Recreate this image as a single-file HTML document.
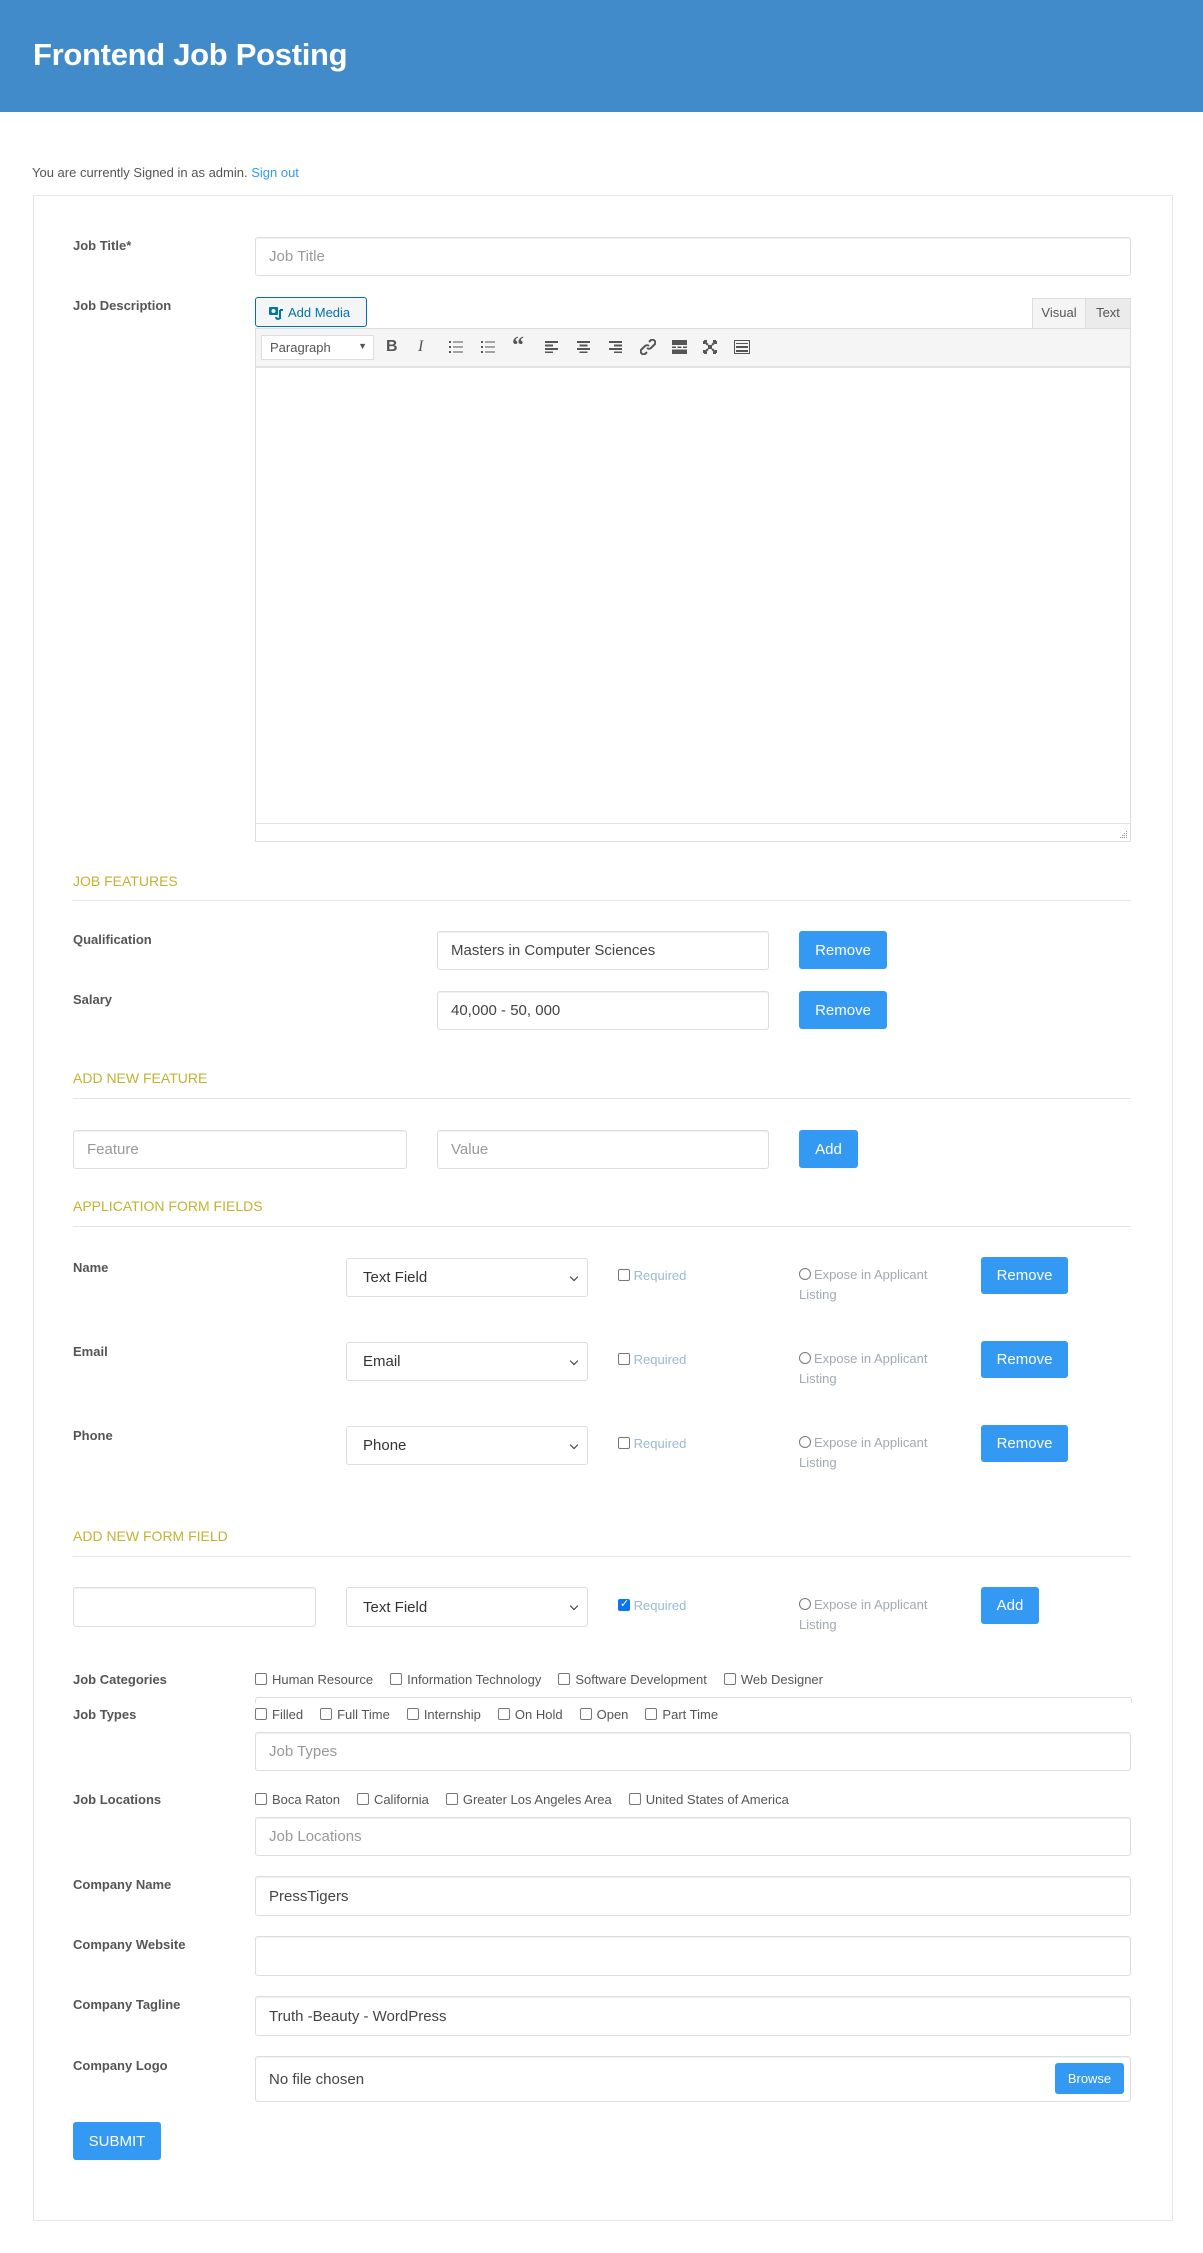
<!DOCTYPE html>
<html><head><meta charset="utf-8">
<style>
*{box-sizing:border-box;margin:0;padding:0}
body{width:1203px;height:2253px;background:#fff;font-family:"Liberation Sans",sans-serif;position:relative;overflow:hidden;color:#444}
.a{position:absolute}
.hdr{left:0;top:0;width:1203px;height:112px;background:#418bca}
.hdr h1{position:absolute;left:33px;top:37px;color:#fff;font-size:31px;font-weight:bold;letter-spacing:-0.3px}
.box{left:33px;top:195px;width:1140px;height:2026px;border:1px solid #e6e6e6}
.lbl{font-size:13px;font-weight:bold;color:#555;left:73px}
.inp{border:1px solid #ddd;border-radius:3px;background:#fff;font-size:15px;color:#444;padding-left:13px;display:flex;align-items:center;box-shadow:inset 0 1px 1px rgba(0,0,0,.06)}
.ph{color:#999}
.btn{background:#3399f3;color:#fff;border-radius:3px;font-size:15px;display:flex;align-items:center;justify-content:center}
.h2{left:73px;font-size:14px;color:#c2b330}
.hr{left:73px;width:1058px;height:1px;background:#e6e6e6}
.sel{border:1px solid #ddd;border-radius:3px;font-size:15px;color:#333;padding-left:16px;display:flex;align-items:center}
.sel:after{content:"";position:absolute;right:10px;top:15px;width:5px;height:5px;border-right:1.5px solid #333;border-bottom:1.5px solid #333;transform:rotate(45deg)}
.cb{width:12px;height:12px;border:1px solid #777;border-radius:2px;display:inline-block;vertical-align:-1px;background:#fff}
.req{font-size:13px;color:#9ab9d6}
.exp{font-size:13px;color:#a0aab3;line-height:20px;width:150px}
.rd{width:12px;height:12px;border:1px solid #777;border-radius:50%;display:inline-block;vertical-align:-1px;margin-right:3px}
.chk{font-size:13px;color:#555;left:255px;white-space:nowrap}
.chk span.cb{margin-right:5px}
.chk i{font-style:normal;margin-right:17px}
.tb svg{position:absolute}
</style></head><body>
<div class="a hdr"><h1>Frontend Job Posting</h1></div>
<div class="a" style="left:32px;top:165px;font-size:13px;color:#555">You are currently Signed in as admin. <span style="color:#3399f3">Sign out</span></div>
<div class="a box"></div>

<div class="a lbl" style="top:238px">Job Title*</div>
<div class="a inp" style="left:255px;top:237px;width:876px;height:39px"><span class="ph">Job Title</span></div>

<div class="a lbl" style="top:298px">Job Description</div>
<div class="a" style="left:255px;top:297px;width:112px;height:30px;border:1px solid #0073aa;border-radius:3px;background:#f3f5f6;font-size:13px;color:#0073aa;display:flex;align-items:center;padding-left:32px">Add Media
<svg class="a" style="left:13px;top:8px" width="16" height="15" viewBox="0 0 16 15"><rect x="0" y="1" width="9" height="8" rx="1" fill="#0073aa"/><circle cx="4.5" cy="5" r="2" fill="#f3f5f6"/><path d="M11 4v9M11 4h3M7 11a2 2 0 1 0 4 0" stroke="#0073aa" stroke-width="2" fill="none"/></svg></div>
<div class="a" style="left:1032px;top:298px;width:54px;height:30px;background:#f5f5f5;border:1px solid #ddd;border-bottom:none;font-size:13px;color:#555;text-align:center;line-height:28px">Visual</div>
<div class="a" style="left:1086px;top:298px;width:45px;height:30px;background:#ebebeb;border:1px solid #ddd;border-left:none;border-bottom:none;font-size:13px;color:#555;text-align:center;line-height:28px">Text</div>
<div class="a" style="left:255px;top:328px;width:876px;height:514px;border:1px solid #ddd;background:#fff"></div>
<div class="a tb" style="left:256px;top:329px;width:874px;height:39px;background:#f5f5f5;border-bottom:2px solid #e2e2e2">
 <div class="a" style="left:5px;top:6px;width:113px;height:25px;background:#fff;border:1px solid #ddd;font-size:13px;color:#555;padding:4px 0 0 8px">Paragraph<span style="position:absolute;right:6px;top:5px;font-size:9px">▼</span></div>
 <div class="a" style="left:130px;top:9px;font-size:16px;font-weight:bold;color:#555">B</div>
 <div class="a" style="left:162px;top:9px;font-size:16px;font-style:italic;font-family:'Liberation Serif',serif;color:#555">I</div>
 <svg style="left:193px;top:12px" width="14" height="12"><g fill="#555"><rect x="0" y="0" width="2" height="2"/><rect x="0" y="5" width="2" height="2"/><rect x="0" y="10" width="2" height="2"/><rect x="4" y="0.5" width="10" height="1"/><rect x="4" y="5.5" width="10" height="1"/><rect x="4" y="10.5" width="10" height="1"/></g></svg>
 <svg style="left:225px;top:12px" width="14" height="12"><g fill="#555"><rect x="0" y="0" width="2" height="2"/><rect x="0" y="5" width="2" height="2"/><rect x="0" y="10" width="2" height="2"/><rect x="4" y="0.5" width="10" height="1"/><rect x="4" y="5.5" width="10" height="1"/><rect x="4" y="10.5" width="10" height="1"/></g></svg>
 <div class="a" style="left:256px;top:4px;font-size:24px;font-weight:bold;color:#555;font-family:'Liberation Serif',serif">“</div>
 <svg style="left:289px;top:12px" width="13" height="12"><g fill="#555"><rect y="0" width="13" height="2"/><rect y="3.5" width="8" height="2"/><rect y="7" width="13" height="2"/><rect y="10.5" width="8" height="1.5"/></g></svg>
 <svg style="left:321px;top:12px" width="13" height="12"><g fill="#555"><rect y="0" width="13" height="2"/><rect x="2.5" y="3.5" width="8" height="2"/><rect y="7" width="13" height="2"/><rect x="2.5" y="10.5" width="8" height="1.5"/></g></svg>
 <svg style="left:353px;top:12px" width="13" height="12"><g fill="#555"><rect y="0" width="13" height="2"/><rect x="5" y="3.5" width="8" height="2"/><rect y="7" width="13" height="2"/><rect x="5" y="10.5" width="8" height="1.5"/></g></svg>
 <svg style="left:384px;top:10px" width="16" height="16"><path d="M9 3l2-2a3 3 0 0 1 4 4l-4 4a3 3 0 0 1-4 0M7 13l-2 2a3 3 0 0 1-4-4l4-4a3 3 0 0 1 4 0" stroke="#555" stroke-width="2" fill="none"/></svg>
 <svg style="left:416px;top:11px" width="15" height="14"><g fill="#555"><rect width="15" height="5"/><rect y="6.5" width="4" height="1.5"/><rect x="5.5" y="6.5" width="4" height="1.5"/><rect x="11" y="6.5" width="4" height="1.5"/><rect y="9.5" width="15" height="4.5"/></g></svg>
 <svg style="left:447px;top:11px" width="14" height="14"><path d="M1 1l4 4M13 1l-4 4M1 13l4-4M13 13l-4-4M1 1h3M1 1v3M13 1h-3M13 1v3M1 13h3M1 13v-3M13 13h-3M13 13v-3" stroke="#555" stroke-width="2" fill="none"/><rect x="5" y="5" width="4" height="4" fill="#555"/></svg>
 <svg style="left:478px;top:11px" width="16" height="14"><rect x="0.5" y="0.5" width="15" height="13" fill="none" stroke="#555"/><g fill="#555"><rect x="2" y="3" width="12" height="1"/><rect x="2" y="6" width="12" height="2"/><rect x="2" y="10" width="12" height="2"/></g></svg>
</div>
<div class="a" style="left:256px;top:823px;width:874px;height:1px;background:#e2e2e2"></div>
<svg class="a" style="left:1118px;top:829px" width="10" height="10"><g fill="#999"><rect x="8" y="2" width="1" height="1"/><rect x="6" y="4" width="1" height="1"/><rect x="8" y="4" width="1" height="1"/><rect x="4" y="6" width="1" height="1"/><rect x="6" y="6" width="1" height="1"/><rect x="8" y="6" width="1" height="1"/><rect x="2" y="8" width="1" height="1"/><rect x="4" y="8" width="1" height="1"/><rect x="6" y="8" width="1" height="1"/><rect x="8" y="8" width="1" height="1"/></g></svg>

<div class="a h2" style="top:873px">JOB FEATURES</div>
<div class="a hr" style="top:900px"></div>
<div class="a lbl" style="top:932px">Qualification</div>
<div class="a inp" style="left:437px;top:931px;width:332px;height:39px">Masters in Computer Sciences</div>
<div class="a btn" style="left:799px;top:931px;width:88px;height:38px">Remove</div>
<div class="a lbl" style="top:992px">Salary</div>
<div class="a inp" style="left:437px;top:991px;width:332px;height:39px">40,000 - 50, 000</div>
<div class="a btn" style="left:799px;top:991px;width:88px;height:38px">Remove</div>

<div class="a h2" style="top:1070px">ADD NEW FEATURE</div>
<div class="a hr" style="top:1098px"></div>
<div class="a inp" style="left:73px;top:1130px;width:334px;height:39px"><span class="ph">Feature</span></div>
<div class="a inp" style="left:437px;top:1130px;width:332px;height:39px"><span class="ph">Value</span></div>
<div class="a btn" style="left:799px;top:1130px;width:59px;height:38px">Add</div>

<div class="a h2" style="top:1198px">APPLICATION FORM FIELDS</div>
<div class="a hr" style="top:1226px"></div>

<div class="a lbl" style="top:1260px">Name</div>
<div class="a sel" style="left:346px;top:1258px;width:242px;height:39px">Text Field</div>
<div class="a req" style="left:618px;top:1268px"><span class="cb"></span> Required</div>
<div class="a exp" style="left:799px;top:1265px"><span class="rd"></span>Expose in Applicant Listing</div>
<div class="a btn" style="left:981px;top:1257px;width:87px;height:37px">Remove</div>

<div class="a lbl" style="top:1344px">Email</div>
<div class="a sel" style="left:346px;top:1342px;width:242px;height:39px">Email</div>
<div class="a req" style="left:618px;top:1352px"><span class="cb"></span> Required</div>
<div class="a exp" style="left:799px;top:1349px"><span class="rd"></span>Expose in Applicant Listing</div>
<div class="a btn" style="left:981px;top:1341px;width:87px;height:37px">Remove</div>

<div class="a lbl" style="top:1428px">Phone</div>
<div class="a sel" style="left:346px;top:1426px;width:242px;height:39px">Phone</div>
<div class="a req" style="left:618px;top:1436px"><span class="cb"></span> Required</div>
<div class="a exp" style="left:799px;top:1433px"><span class="rd"></span>Expose in Applicant Listing</div>
<div class="a btn" style="left:981px;top:1425px;width:87px;height:37px">Remove</div>

<div class="a h2" style="top:1528px">ADD NEW FORM FIELD</div>
<div class="a hr" style="top:1556px"></div>
<div class="a inp" style="left:73px;top:1587px;width:243px;height:40px"></div>
<div class="a sel" style="left:346px;top:1587px;width:242px;height:40px">Text Field</div>
<div class="a req" style="left:618px;top:1598px"><span class="cb" style="background:#0a75f0;border-color:#0a75f0;position:relative"><span style="position:absolute;left:1px;top:-3px;color:#fff;font-size:11px">✓</span></span> Required</div>
<div class="a exp" style="left:799px;top:1595px"><span class="rd"></span>Expose in Applicant Listing</div>
<div class="a btn" style="left:981px;top:1587px;width:58px;height:37px">Add</div>

<div class="a lbl" style="top:1672px">Job Categories</div>
<div class="a chk" style="top:1672px"><span class="cb"></span><i>Human Resource</i><span class="cb"></span><i>Information Technology</i><span class="cb"></span><i>Software Development</i><span class="cb"></span><i>Web Designer</i></div>
<div class="a" style="left:255px;top:1697px;width:877px;height:6px;border:1px solid #ddd;border-bottom:none;border-radius:3px 3px 0 0"></div>
<div class="a lbl" style="top:1707px">Job Types</div>
<div class="a chk" style="top:1707px"><span class="cb"></span><i>Filled</i><span class="cb"></span><i>Full Time</i><span class="cb"></span><i>Internship</i><span class="cb"></span><i>On Hold</i><span class="cb"></span><i>Open</i><span class="cb"></span><i>Part Time</i></div>
<div class="a inp" style="left:255px;top:1732px;width:876px;height:39px"><span class="ph">Job Types</span></div>
<div class="a lbl" style="top:1792px">Job Locations</div>
<div class="a chk" style="top:1792px"><span class="cb"></span><i>Boca Raton</i><span class="cb"></span><i>California</i><span class="cb"></span><i>Greater Los Angeles Area</i><span class="cb"></span><i>United States of America</i></div>
<div class="a inp" style="left:255px;top:1817px;width:876px;height:39px"><span class="ph">Job Locations</span></div>

<div class="a lbl" style="top:1877px">Company Name</div>
<div class="a inp" style="left:255px;top:1876px;width:876px;height:40px">PressTigers</div>
<div class="a lbl" style="top:1937px">Company Website</div>
<div class="a inp" style="left:255px;top:1936px;width:876px;height:40px"></div>
<div class="a lbl" style="top:1997px">Company Tagline</div>
<div class="a inp" style="left:255px;top:1996px;width:876px;height:40px">Truth -Beauty - WordPress</div>
<div class="a lbl" style="top:2058px">Company Logo</div>
<div class="a inp" style="left:255px;top:2056px;width:876px;height:46px">No file chosen</div>
<div class="a btn" style="left:1055px;top:2063px;width:69px;height:31px;font-size:13px">Browse</div>
<div class="a btn" style="left:73px;top:2122px;width:88px;height:38px;font-size:15px">SUBMIT</div>
</body></html>
